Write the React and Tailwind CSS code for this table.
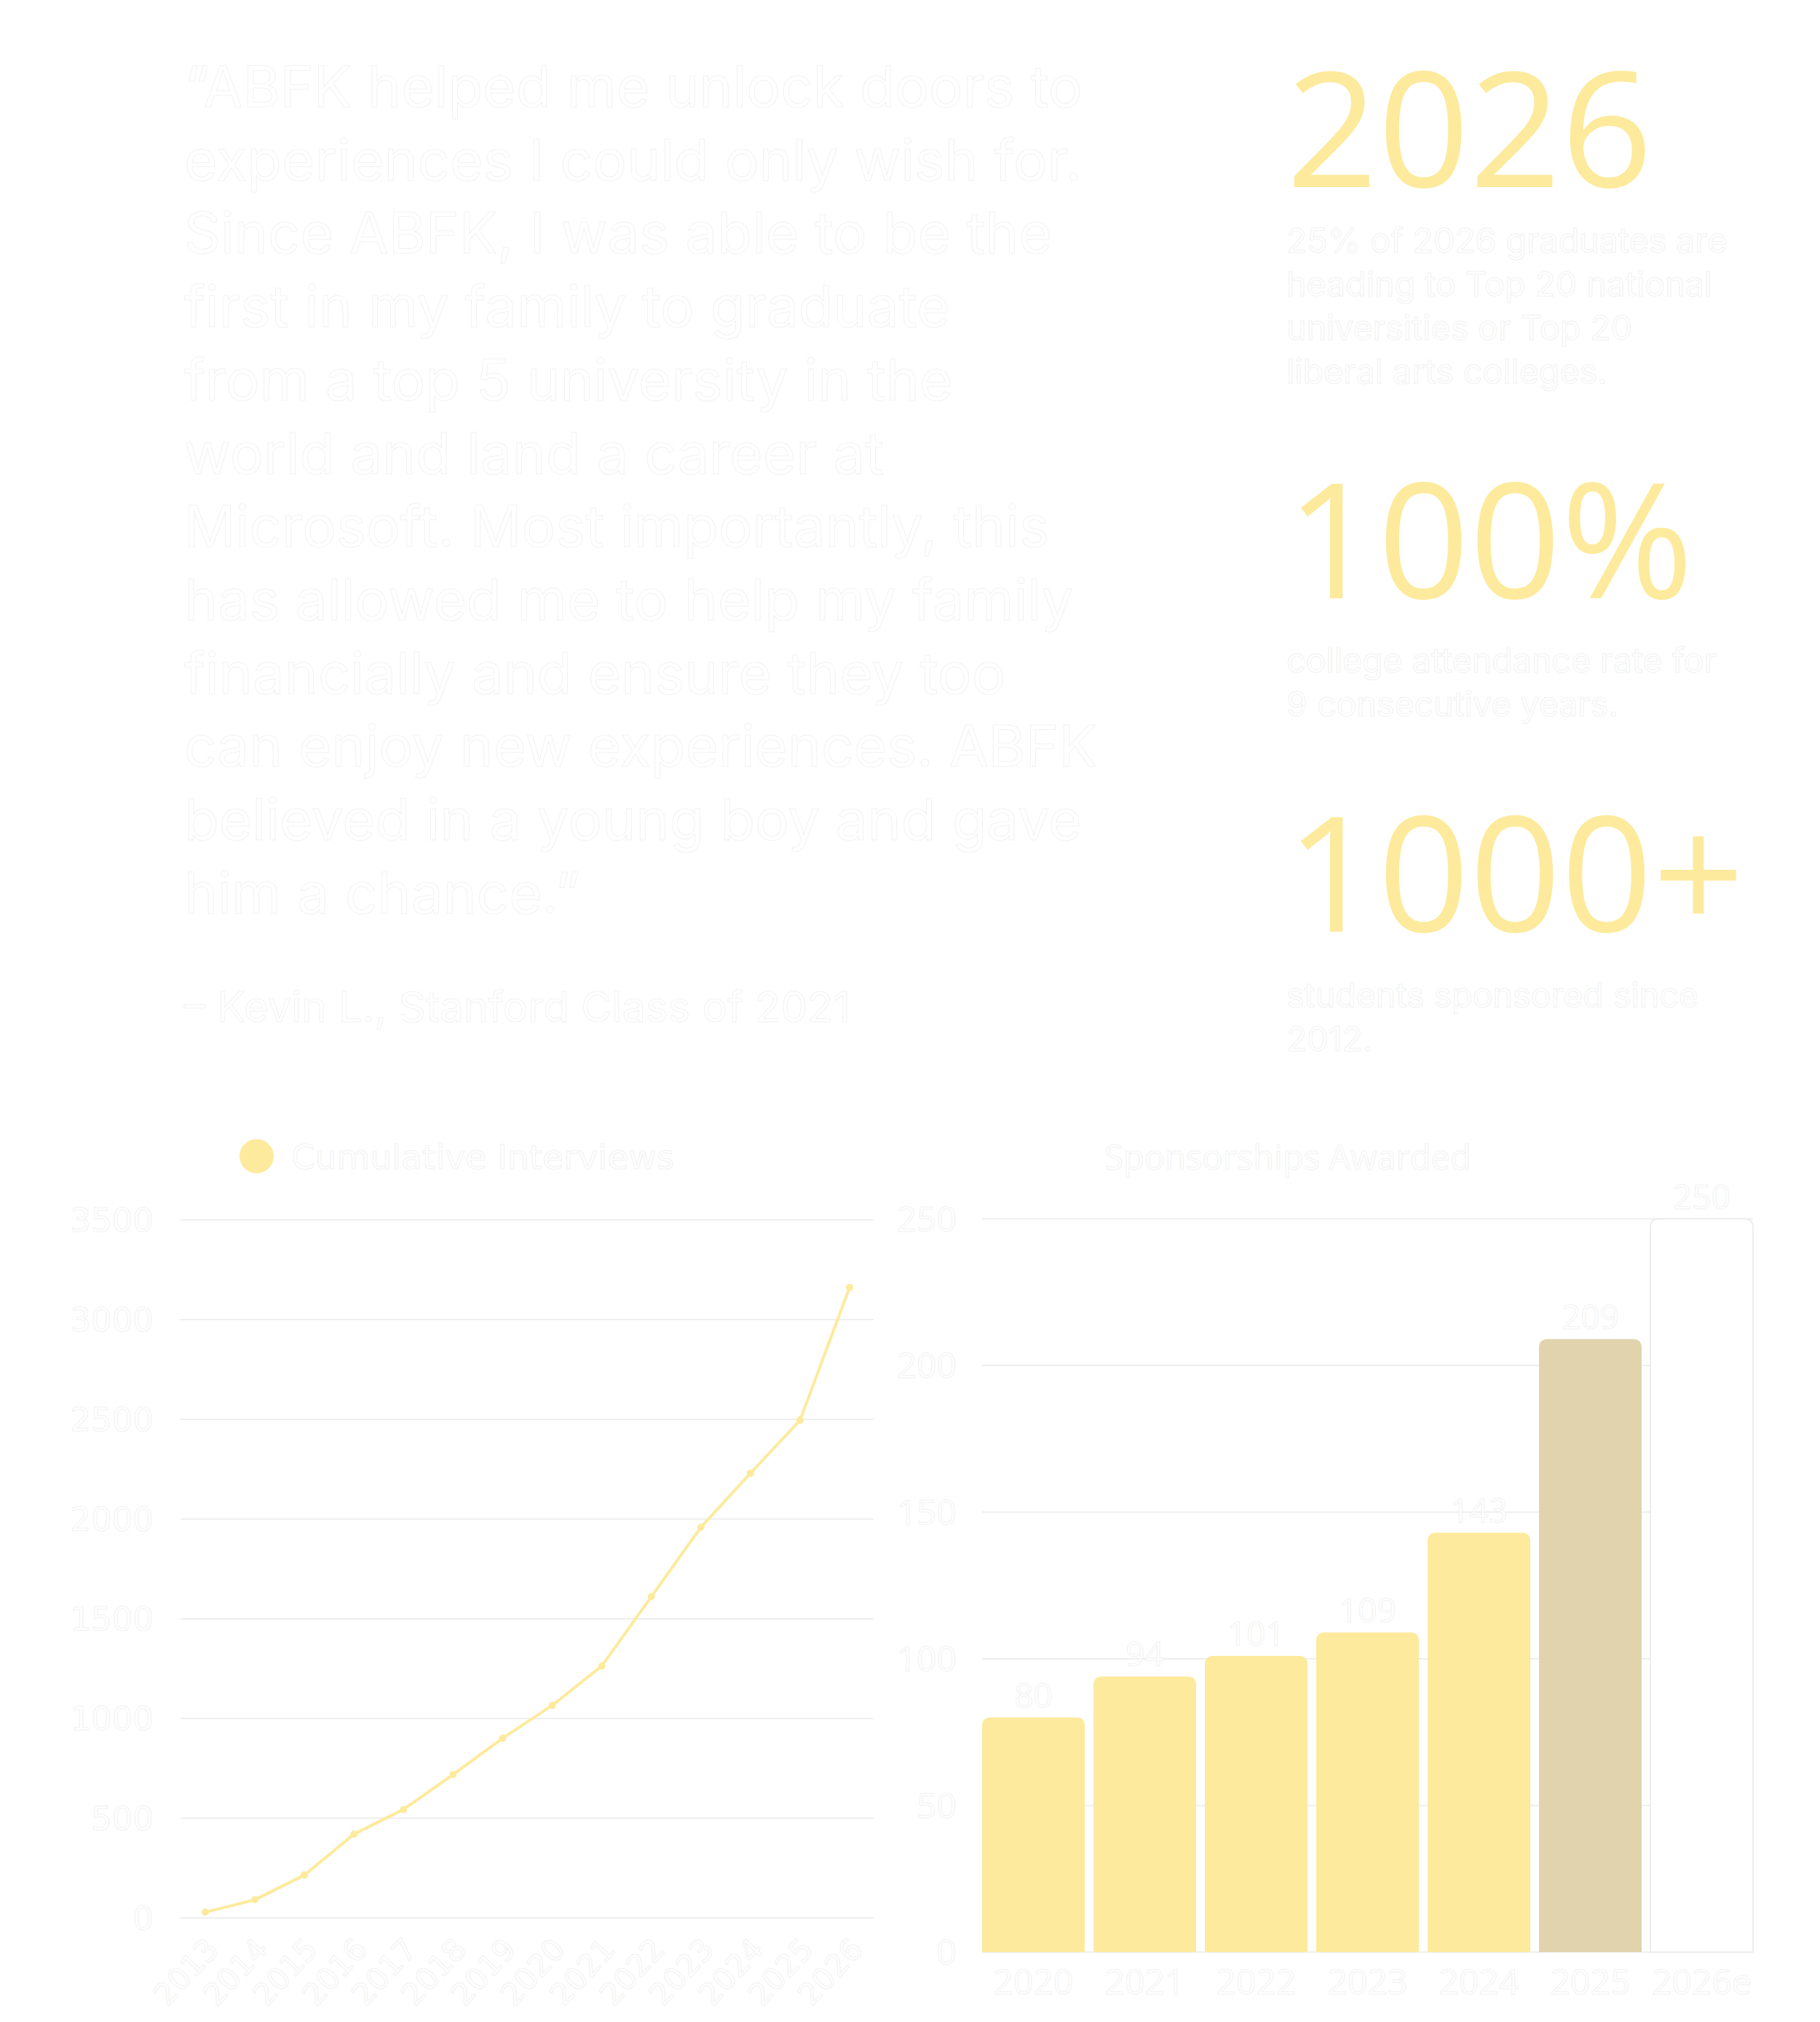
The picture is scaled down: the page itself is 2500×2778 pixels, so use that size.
const YELLOW = "#FDEA9C";
const TAN = "#E0D3AD";
const GRID = "#efefef";
const EDGE = "#f1f2f1";

const quoteLines = [
  "“ABFK helped me unlock doors to",
  "experiences I could only wish for.",
  "Since ABFK, I was able to be the",
  "first in my family to graduate",
  "from a top 5 university in the",
  "world and land a career at",
  "Microsoft. Most importantly, this",
  "has allowed me to help my family",
  "financially and ensure they too",
  "can enjoy new experiences. ABFK",
  "believed in a young boy and gave",
  "him a chance.”",
];

const stats = [
  {
    value: "2026",
    gap: "",
    descGap: "mt-[18px]",
    lines: ["25% of 2026 graduates are", "heading to Top 20 national", "universities or Top 20", "liberal arts colleges."],
  },
  {
    value: "100%",
    gap: "mt-[87px]",
    descGap: "mt-[30px]",
    lines: ["college attendance rate for", "9 consecutive years."],
  },
  {
    value: "1000+",
    gap: "mt-[88px]",
    descGap: "mt-[32px]",
    lines: ["students sponsored since", "2012."],
  },
];

const interviews = [29, 91, 215, 420, 544, 719, 901, 1066, 1263, 1611, 1959, 2230, 2496, 3161];
const sponsorships = [
  { year: "2020", v: 80, fill: YELLOW },
  { year: "2021", v: 94, fill: YELLOW },
  { year: "2022", v: 101, fill: YELLOW },
  { year: "2023", v: 109, fill: YELLOW },
  { year: "2024", v: 143, fill: YELLOW },
  { year: "2025", v: 209, fill: TAN },
  { year: "2026e", v: 250, fill: "#ffffff", stroke: "#ededed" },
];

const lineFont = "'DejaVu Sans', 'Open Sans', sans-serif";
const barFont = "'Open Sans', 'Noto Sans', sans-serif";

function Stat({ stat }) {
  return (
    <div className={stat.gap}>
      <div className="font-['Open_Sans',sans-serif] text-[220px] leading-none text-[#FDEA9C]">{stat.value}</div>
      <p className={`${stat.descGap} text-[46.5px] leading-[60px] text-white [-webkit-text-stroke:1px_#f1f2f1]`}>
        {stat.lines.map((l) => (
          <span key={l} className="block whitespace-nowrap">
            {l}
          </span>
        ))}
      </p>
    </div>
  );
}

function InterviewsChart() {
  const y = (v) => 1115 - v * 0.274;
  const x = (i) => 282 + i * 68.08;
  const pts = interviews.map((v, i) => `${x(i).toFixed(1)},${y(v).toFixed(1)}`).join(" ");
  return (
    <svg width="1220" height="1258" viewBox="0 0 1220 1258" className="block shrink-0">
      <circle cx="352.5" cy="68.5" r="23.5" fill={YELLOW} />
      <text x="400" y="86" fontFamily={lineFont} fontSize="47" fill="#fff" stroke={EDGE} strokeWidth="1">
        Cumulative Interviews
      </text>
      {[0, 500, 1000, 1500, 2000, 2500, 3000, 3500].map((v) => (
        <g key={v}>
          <line x1="248" x2="1200" y1={y(v)} y2={y(v)} stroke={GRID} strokeWidth="2" />
          <text x="211" y={y(v) + 16} textAnchor="end" fontFamily={lineFont} fontSize="45" fill="#fff" stroke={EDGE} strokeWidth="1">
            {v}
          </text>
        </g>
      ))}
      <polyline points={pts} fill="none" stroke={YELLOW} strokeWidth="4" strokeLinejoin="round" />
      {interviews.map((v, i) => (
        <circle key={i} cx={x(i)} cy={y(v)} r="5" fill={YELLOW} />
      ))}
      {interviews.map((_, i) => (
        <text
          key={i}
          transform={`translate(${(x(i) + 10).toFixed(1)} 1150) rotate(-47)`}
          textAnchor="end"
          dominantBaseline="central"
          fontFamily={lineFont}
          fontSize="42"
          fill="#fff"
          stroke={EDGE}
          strokeWidth="1"
        >
          {2013 + i}
        </text>
      ))}
    </svg>
  );
}

function barPath(x, top, w, bottom, r) {
  return `M${x},${bottom} V${top + r} Q${x},${top} ${x + r},${top} H${x + w - r} Q${x + w},${top} ${x + w},${top + r} V${bottom} Z`;
}

function SponsorshipChart() {
  const y = (v) => 1162 - v * 4.03;
  const bx = (i) => 129 + i * 153;
  return (
    <svg width="1280" height="1258" viewBox="0 0 1280 1258" className="block shrink-0">
      <text x="549" y="87" textAnchor="middle" fontFamily={barFont} fontSize="47" fill="#fff" stroke={EDGE} strokeWidth="1">
        Sponsorships Awarded
      </text>
      {[0, 50, 100, 150, 200, 250].map((v) => (
        <g key={v}>
          <line x1="129" x2="1188" y1={y(v)} y2={y(v)} stroke={GRID} strokeWidth="2" />
          <text x="94" y={y(v) + 17} textAnchor="end" fontFamily={barFont} fontSize="48" fill="#fff" stroke={EDGE} strokeWidth="1">
            {v}
          </text>
        </g>
      ))}
      {sponsorships.map((b, i) => (
        <g key={b.year}>
          <path
            d={barPath(bx(i), y(b.v), 141, 1162, 12)}
            fill={b.fill}
            stroke={b.stroke || "none"}
            strokeWidth="2"
          />
          <text
            x={bx(i) + 70.5}
            y={y(b.v) - 14}
            textAnchor="middle"
            fontFamily={barFont}
            fontSize="46"
            fill="#fff"
            stroke={EDGE}
            strokeWidth="1"
          >
            {b.v}
          </text>
          <text
            x={bx(i) + 70.5}
            y="1220"
            textAnchor="middle"
            fontFamily={barFont}
            fontSize="48"
            fill="#fff"
            stroke={EDGE}
            strokeWidth="1"
          >
            {b.year}
          </text>
        </g>
      ))}
    </svg>
  );
}

export default function App() {
  return (
    <div className="w-[2500px] min-h-[2778px] overflow-hidden bg-white font-['Inter','Liberation_Sans',sans-serif]">
      <section className="flex h-[1520px]">
        <div className="w-[1767px] shrink-0 pl-[253px] pt-[69px]">
          <blockquote className="text-[78px] leading-[100.7px] text-white [-webkit-text-stroke:1px_#f1f2f1]">
            {quoteLines.map((l) => (
              <span key={l} className="block whitespace-nowrap">
                {l}
              </span>
            ))}
          </blockquote>
          <p className="mt-[70px] text-[58px] leading-[72px] text-white [-webkit-text-stroke:1px_#f1f2f1]">
            – Kevin L., Stanford Class of 2021
          </p>
        </div>
        <div className="flex flex-col pt-[62px]">
          {stats.map((s) => (
            <Stat key={s.value} stat={s} />
          ))}
        </div>
      </section>
      <section className="flex">
        <InterviewsChart />
        <SponsorshipChart />
      </section>
    </div>
  );
}
